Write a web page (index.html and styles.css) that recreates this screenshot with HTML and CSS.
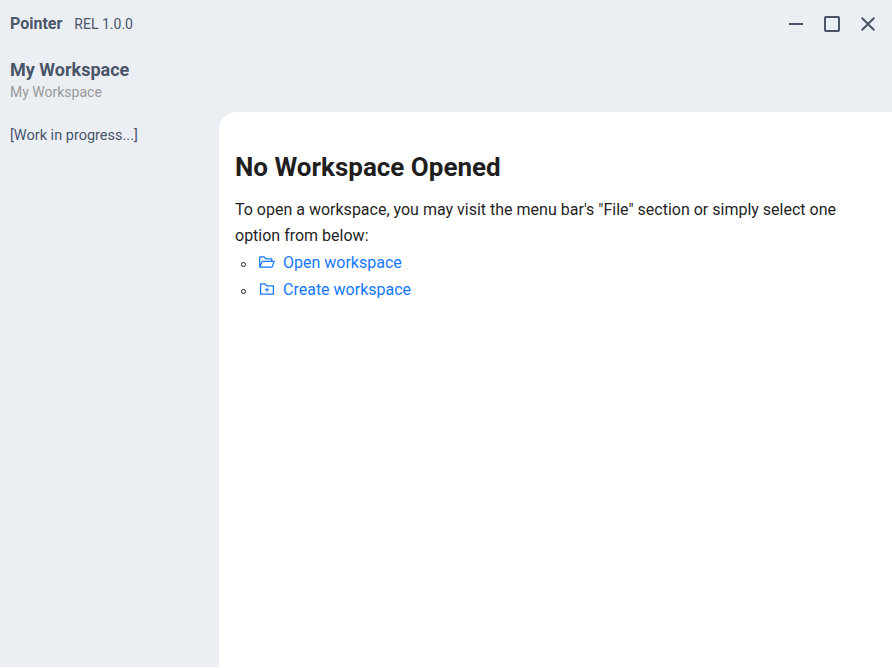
FILE: index.html
```html
<!DOCTYPE html>
<html lang="en">
<head>
<meta charset="utf-8">
<title>Pointer</title>
<link rel="stylesheet" href="styles.css">
</head>
<body>
<div class="app">
<header class="titlebar">
  <strong class="app-name">Pointer</strong>
  <span class="version">REL 1.0.0</span>
  <div class="controls">
    <svg viewBox="0 0 24 24"><path d="M19 13H5v-2h14z"/></svg>
    <svg viewBox="0 0 24 24"><rect class="outline" x="5" y="5" width="14" height="14" rx="1"/></svg>
    <svg viewBox="0 0 24 24"><path d="M19 6.41 17.59 5 12 10.59 6.41 5 5 6.41 10.59 12 5 17.59 6.41 19 12 13.41 17.59 19 19 17.59 13.41 12z"/></svg>
  </div>
</header>
<div class="shell">
  <aside class="sidebar">
    <h2 class="side-title">My Workspace</h2>
    <p class="side-sub">My Workspace</p>
    <p class="side-note">[Work in progress...]</p>
  </aside>
  <main class="content">
    <h1>No Workspace Opened</h1>
    <p class="lead">To open a workspace, you may visit the menu bar's "File" section or simply select one option from below:</p>
    <ul class="options">
      <li><a><svg viewBox="0 0 1024 1024"><path d="M928 444H820V330.400c0-17.700-14.300-32-32-32H473L355.700 186.200a8.150 8.150 0 00-5.500-2.200H96c-17.700 0-32 14.300-32 32v592c0 17.700 14.300 32 32 32h698c13 0 24.800-7.900 29.700-20l134-332c1.500-3.800 2.300-7.900 2.300-12 0-17.700-14.300-32-32-32zM136 256h188.500l119.600 114.400H748V444H238c-13 0-24.800 7.900-29.700 20L136 643.200V256zm635.300 512H159l103.300-256h612.400L771.300 768z"/></svg>Open workspace</a></li>
      <li><a><svg viewBox="0 0 1024 1024"><path d="M484 443.100V528h-84.500c-4.100 0-7.500 3.100-7.500 7v42c0 3.800 3.400 7 7.500 7H484v84.900c0 3.900 3.200 7.100 7 7.100h42c3.900 0 7-3.200 7-7.100V584h84.500c4.100 0 7.500-3.200 7.500-7v-42c0-3.900-3.400-7-7.500-7H540v-84.900c0-3.900-3.100-7.100-7-7.100h-42c-3.800 0-7 3.200-7 7.100zm396-144.700H521L403.700 186.200a8.150 8.150 0 00-5.500-2.200H144c-17.700 0-32 14.300-32 32v592c0 17.700 14.300 32 32 32h736c17.700 0 32-14.300 32-32V330.400c0-17.700-14.300-32-32-32zM840 768H184V256h188.500l119.600 114.400H840V768z"/></svg>Create workspace</a></li>
    </ul>
  </main>
</div>
</div>
</body>
</html>
```
FILE: styles.css
```css
*, *::before { box-sizing: border-box; }
body {
  margin: 0;
  background: #fff;
  color: #4a5568;
  font: 14px/22px Roboto, sans-serif;
}
.app {
  display: flex;
  flex-direction: column;
  height: 667px;
  background: #ebeff4;
}
h1, h2, p, ul { margin: 0; padding: 0; }
.titlebar {
  display: flex;
  align-items: center;
  height: 48px;
  padding: 0 12px 0 10px;
}
.app-name { font-size: 16px; font-weight: 700; }
.version { margin-left: 12px; }
.controls { display: flex; gap: 12px; margin-left: auto; }
.controls svg { width: 24px; height: 24px; fill: currentColor; }
.controls .outline { fill: none; stroke: currentColor; stroke-width: 2; }
.shell { flex: 1; display: flex; }
.sidebar { width: 219px; padding: 10px; }
.side-title { font-size: 18px; line-height: 24px; font-weight: 700; }
.side-sub { line-height: 20px; color: #999; }
.side-note { margin-top: 23px; font-size: 14.5px; }
.content {
  flex: 1;
  margin-top: 64px;
  padding: 36px 16px;
  border-top-left-radius: 18px;
  background: #fff;
  color: #1f1f1f;
}
h1 { font-size: 26px; line-height: 38px; font-weight: 700; }
.lead { margin-top: 11px; font-size: 16px; line-height: 26px; }
.options { list-style: none; font-size: 16px; line-height: 27px; }
.options li { display: flex; align-items: center; }
.options li::before {
  content: "";
  width: 5px;
  height: 5px;
  margin: 4px 12px 0 6px;
  border: 1px solid #1f1f1f;
  border-radius: 50%;
}
.options a { color: #1677ff; }
.options svg { width: 18px; height: 18px; margin-right: 7px; fill: currentColor; vertical-align: -3px; }
```
